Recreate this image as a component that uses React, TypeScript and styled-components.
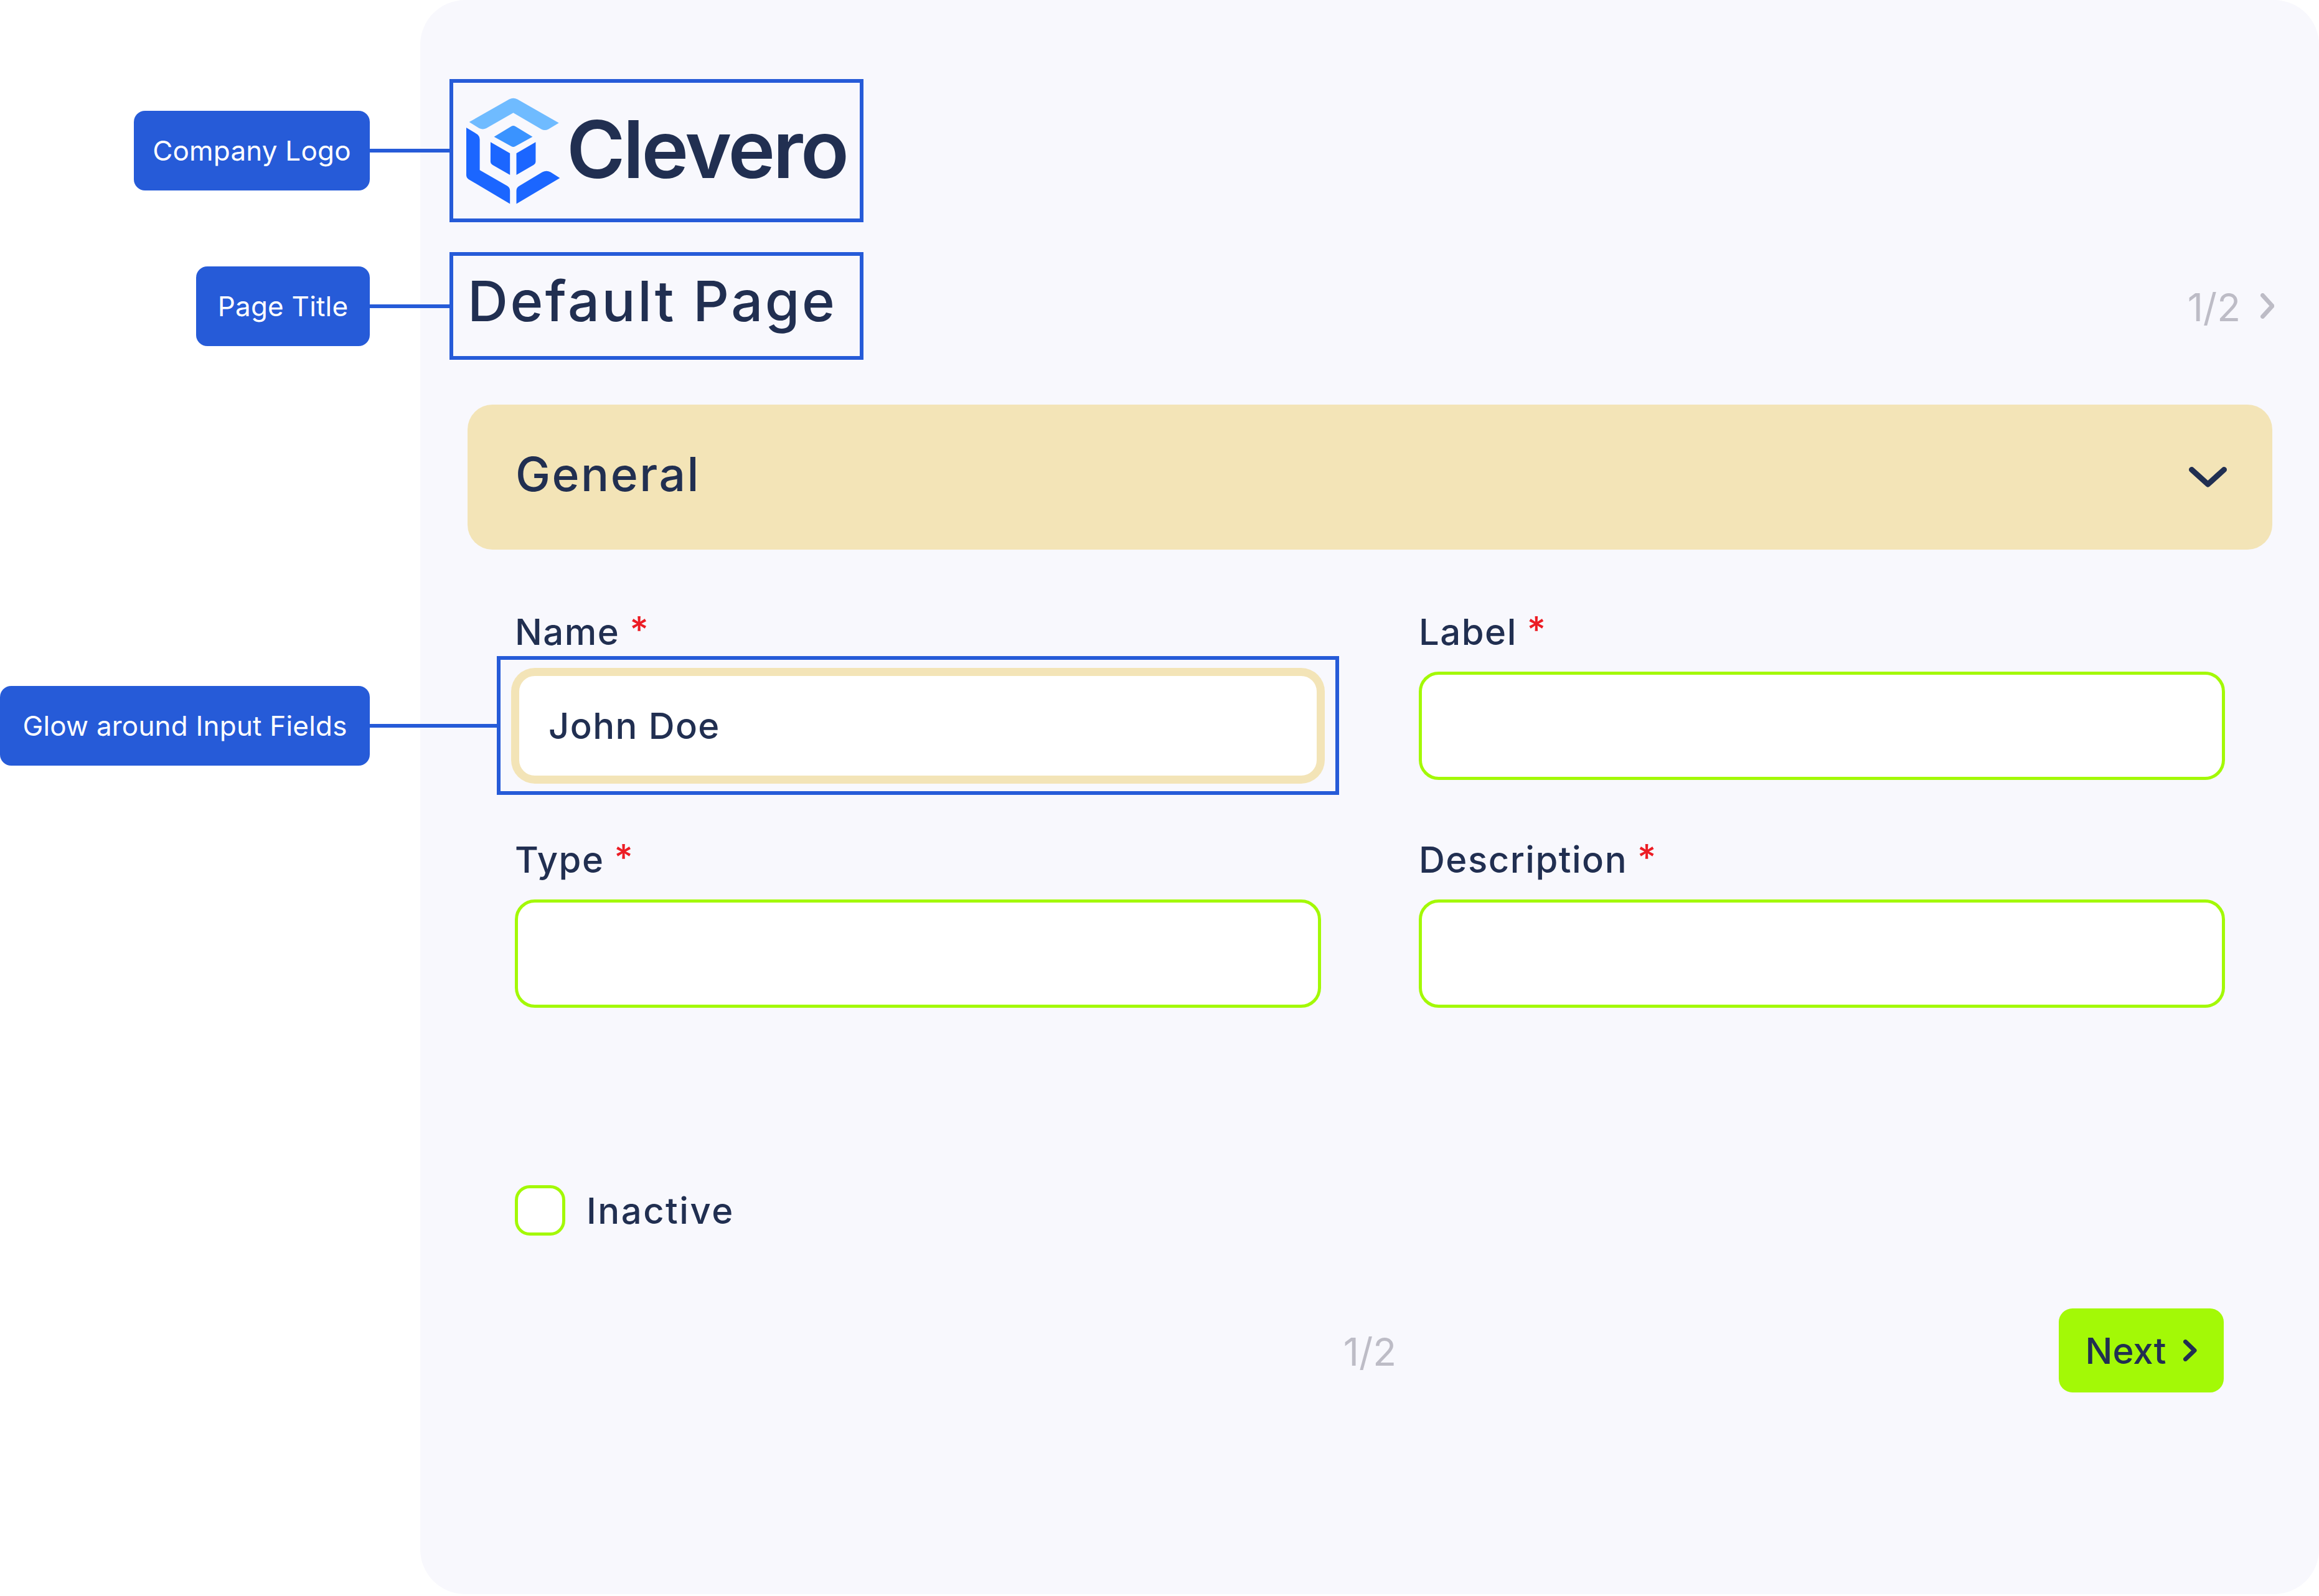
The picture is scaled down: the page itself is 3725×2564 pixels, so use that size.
import styled, { createGlobalStyle } from "styled-components"

const GlobalStyle = createGlobalStyle`
    * {
        box-sizing: border-box;
    }
    body {
        margin: 0;
        background: #fff;
        font-family: "Inter", "Liberation Sans", sans-serif;
        color: #212f51;
    }
`

const Page = styled.div`
    width: 3725px;
    height: 2564px;
    padding-left: 675px;
`

const Panel = styled.main`
    height: 2561px;
    padding: 127px 75px 0 76px;
    background: #f8f8fd;
    border-radius: 72px;
`

// blue frame used by the annotations
const Framed = styled.div`
    position: relative;
    border: 6px solid #265bd8;
`

const LogoBox = styled(Framed)`
    width: 665px;
    height: 230px;
    margin-left: -29px;
    padding: 0 0 0 20px;
    display: flex;
    align-items: center;
    gap: 9px;
`

const LogoText = styled.span`
    font-size: 128px;
    line-height: 1;
    font-weight: 600;
    letter-spacing: -3.6px;
    padding-bottom: 4px;
`

const TitleRow = styled.div`
    margin-top: 48px;
    height: 173px;
    display: flex;
    align-items: center;
    justify-content: space-between;
`

const TitleBox = styled(Framed)`
    width: 665px;
    height: 173px;
    margin-left: -29px;
    padding: 0 0 16px 23px;
    display: flex;
    align-items: center;
`

const Title = styled.h1`
    margin: 0;
    font-size: 90px;
    line-height: 1;
    font-weight: 500;
    white-space: nowrap;
    letter-spacing: 3.5px;
`

const Callout = styled.div`
    position: absolute;
    top: 50%;
    right: calc(100% + 6px);
    transform: translateY(-50%);
    display: flex;
    align-items: center;
`

const Tag = styled.div<{ $width: number }>`
    width: ${props => props.$width}px;
    height: 128px;
    display: flex;
    align-items: center;
    justify-content: center;
    background: #265bd8;
    color: #fff;
    border-radius: 18px;
    font-size: 44px;
    font-weight: 400;
    letter-spacing: 0.2px;
    white-space: nowrap;
`

const Connector = styled.div<{ $width: number }>`
    width: ${props => props.$width}px;
    height: 6px;
    background: #265bd8;
`

const Pager = styled.span`
    padding-top: 4px;
    font-size: 62px;
    line-height: 1;
    color: #bdbcc6;
    font-weight: 400;
`

const BottomPager = styled(Pager)`
    grid-column: 2;
`

const TopPager = styled.div`
    display: flex;
    align-items: center;
    gap: 32px;
    margin-right: -3px;
`

const SectionBar = styled.div`
    margin-top: 72px;
    height: 233px;
    padding: 0 73px 0 77px;
    display: flex;
    align-items: center;
    justify-content: space-between;
    background: #f3e4b7;
    border-radius: 40px;
`

const SectionTitle = styled.h2`
    margin: 0;
    padding-bottom: 10px;
    font-size: 75px;
    line-height: 1;
    font-weight: 500;
    letter-spacing: 2.5px;
`

const FormGrid = styled.div`
    padding: 106px 76px 0;
    display: grid;
    grid-template-columns: 1fr 1fr;
    column-gap: 157px;
    row-gap: 102px;
`

const Field = styled.div`
    position: relative;
`

const Label = styled.label`
    display: block;
    height: 90px;
    font-size: 58px;
    line-height: 52px;
    font-weight: 500;
    letter-spacing: 1.5px;
`

const Required = styled.span`
    color: #ec1c24;
    margin-left: 16px;
    position: relative;
    top: -4px;
`

const InputBox = styled.div<{ $glow?: boolean }>`
    height: 174px;
    padding: 0 47px;
    display: flex;
    align-items: center;
    background: #fff;
    border-radius: 32px;
    font-size: 58px;
    font-weight: 450;
    letter-spacing: 1.4px;
    border: ${props => props.$glow ? "7px solid #f3e4b7" : "5px solid #a3f906"};
    box-shadow: ${props => props.$glow ? "0 0 0 6px #f3e4b7" : "none"};
`

const GlowFrame = styled(Framed)`
    position: absolute;
    left: -29px;
    right: -29px;
    top: 65px;
    bottom: -24px;
    pointer-events: none;
`

const CheckRow = styled.div`
    margin: 285px 0 0 76px;
    display: flex;
    align-items: center;
    gap: 34px;
`

const CheckBox = styled.div`
    width: 81px;
    height: 81px;
    background: #fff;
    border: 5px solid #a3f906;
    border-radius: 24px;
`

const CheckLabel = styled.span`
    font-size: 58px;
    line-height: 1;
    font-weight: 500;
    letter-spacing: 2.5px;
`

const Footer = styled.div`
    margin-top: 117px;
    padding: 0 78px;
    display: grid;
    grid-template-columns: 1fr auto 1fr;
    align-items: center;
`

const NextButton = styled.button`
    grid-column: 3;
    justify-self: end;
    width: 265px;
    height: 135px;
    padding: 0;
    display: flex;
    align-items: center;
    justify-content: center;
    gap: 28px;
    border: none;
    border-radius: 22px;
    background: #a3f906;
    color: #212f51;
    font-family: inherit;
    font-size: 58px;
    font-weight: 500;
`

const LogoMark = () => (
    <svg width="153" height="175" viewBox="85 90 460 525" style={{ flexShrink: 0 }}>
        <path fill="#6fbbff" d="M102 213L295 103Q315 92 335 103L535 217L485 247Q467 257 450 247L315 168L185 243Q168 252 150 243Z" />
        <path fill="#3a93ff" d="M222 284L305 234Q315 228 325 234L408 284L325 330Q315 336 305 330Z" />
        <path fill="#1b66ff" d="M205 310L299 364V468L215 420Q205 414 205 403Z" />
        <path fill="#1b66ff" d="M330 364L423 310V403Q423 414 413 420L330 468Z" />
        <path fill="#1b66ff" d="M88 240L135 268Q153 278 153 298V445L285 521Q299 529 299 545V608L100 490Q88 482 88 468Z" />
        <path fill="#1b66ff" d="M330 608V545Q330 529 345 521L455 455Q475 444 495 455L540 483Z" />
    </svg>
)

const Chevron = ({ points, color, width, height, stroke }: { points: string, color: string, width: number, height: number, stroke: number }) => (
    <svg width={width} height={height} viewBox={`0 0 ${width} ${height}`} fill="none">
        <polyline points={points} stroke={color} strokeWidth={stroke} strokeLinecap="round" strokeLinejoin="round" />
    </svg>
)

const App = () => {
    return (
        <Page>
            <GlobalStyle />
            <Panel>
                <LogoBox>
                    <Callout>
                        <Tag $width={379}>Company Logo</Tag>
                        <Connector $width={128} />
                    </Callout>
                    <LogoMark />
                    <LogoText>Clevero</LogoText>
                </LogoBox>

                <TitleRow>
                    <TitleBox>
                        <Callout>
                            <Tag $width={279}>Page Title</Tag>
                            <Connector $width={128} />
                        </Callout>
                        <Title>Default Page</Title>
                    </TitleBox>
                    <TopPager>
                        <Pager>1/2</Pager>
                        <Chevron width={22} height={41} stroke={7} color="#bdbcc6" points="3.5,3.5 19,20.5 3.5,37.5" />
                    </TopPager>
                </TitleRow>

                <SectionBar>
                    <SectionTitle>General</SectionTitle>
                    <Chevron width={61} height={33} stroke={9} color="#212f51" points="4.5,4.5 30.5,28 56.5,4.5" />
                </SectionBar>

                <FormGrid>
                    <Field>
                        <Label>Name<Required>*</Required></Label>
                        <InputBox $glow>John Doe</InputBox>
                        <GlowFrame>
                            <Callout>
                                <Tag $width={594}>Glow around Input Fields</Tag>
                                <Connector $width={204} />
                            </Callout>
                        </GlowFrame>
                    </Field>
                    <Field>
                        <Label>Label<Required>*</Required></Label>
                        <InputBox />
                    </Field>
                    <Field>
                        <Label>Type<Required>*</Required></Label>
                        <InputBox />
                    </Field>
                    <Field>
                        <Label>Description<Required>*</Required></Label>
                        <InputBox />
                    </Field>
                </FormGrid>

                <CheckRow>
                    <CheckBox />
                    <CheckLabel>Inactive</CheckLabel>
                </CheckRow>

                <Footer>
                    <BottomPager>1/2</BottomPager>
                    <NextButton>
                        Next
                        <Chevron width={22} height={35} stroke={7} color="#212f51" points="3.5,3.5 18,17.5 3.5,31.5" />
                    </NextButton>
                </Footer>
            </Panel>
        </Page>
    )
}

export default App
